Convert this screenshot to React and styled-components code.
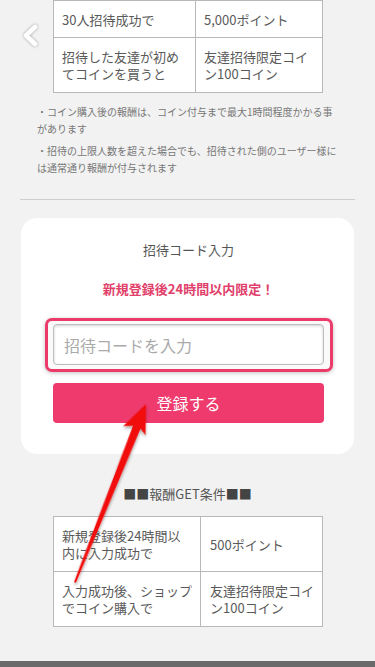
import React from 'react';
import styled, { createGlobalStyle } from 'styled-components';

const GlobalStyle = createGlobalStyle`
  html, body {
    margin: 0;
    padding: 0;
    background: #f2f2f2;
  }
  body {
    font-family: "Noto Sans CJK JP", "Noto Sans", sans-serif;
    color: #555;
  }
`;

const Page = styled.div`
  position: relative;
  width: 375px;
  min-height: 667px;
  display: flex;
  flex-direction: column;
  background: #f2f2f2;
  overflow: hidden;
`;

const Table = styled.table`
  border-collapse: collapse;
  margin: ${props => props.top || 0}px 0 0 53px;
  width: 269px;
  table-layout: fixed;
  background: #fff;
`;

const Cell = styled.td`
  width: ${props => props.width}px;
  height: ${props => props.height}px;
  border: 1px solid #b8b8b8;
  padding: 0 ${props => props.padRight || 8}px 0 ${props => props.padLeft || 8}px;
  box-sizing: border-box;
  font-size: 13px;
  line-height: 17px;
  color: #5a5a5a;
  vertical-align: middle;
`;

const Notes = styled.div`
  width: 301px;
  margin: 11px 0 0 37px;
  display: flex;
  flex-direction: column;
  gap: 6px;
`;

const Note = styled.p`
  margin: 0;
  font-size: 10px;
  line-height: 16.5px;
  color: #777;
`;

const Divider = styled.hr`
  margin: 23px 20px 0;
  border: none;
  border-top: 1px solid #cfcfcf;
`;

const Card = styled.section`
  margin: 18px 21px 0;
  padding: 23px 30px 31px 32px;
  background: #fff;
  border-radius: 16px;
  display: flex;
  flex-direction: column;
  align-items: stretch;
`;

const CardTitle = styled.h2`
  margin: 0;
  font-size: 13px;
  line-height: 18px;
  font-weight: 400;
  color: #555;
  text-align: center;
`;

const Limited = styled.p`
  margin: 21px 0 0;
  font-size: 13px;
  line-height: 18px;
  font-weight: 700;
  color: #e0406a;
  text-align: center;
`;

const InputRing = styled.div`
  margin: 20px -9px 0 -8px;
  padding: 3px 6px 4px 5px;
  border: 3px solid #ec3a6a;
  border-radius: 7px;
  background: #fafafa;
  box-shadow: 0 1px 4px rgba(0, 0, 0, 0.25);
`;

const CodeInput = styled.input`
  display: block;
  width: 100%;
  height: 41px;
  box-sizing: border-box;
  padding: 0 10px;
  border: 1px solid #bdbdbd;
  border-radius: 4px;
  background: #fff;
  box-shadow: inset 0 1px 3px rgba(0, 0, 0, 0.18);
  font-family: "Noto Sans CJK JP", sans-serif;
  font-size: 16px;
  color: #333;
  outline: none;

  &::placeholder {
    color: #aaa;
  }
`;

const SubmitButton = styled.button`
  margin-top: 11px;
  height: 40px;
  border: none;
  border-radius: 4px;
  background: #ee3a6c;
  color: #fff;
  font-family: "Noto Sans CJK JP", sans-serif;
  font-size: 16px;
  cursor: pointer;
`;

const SectionTitle = styled.h3`
  margin: 31px 0 0;
  font-size: 13px;
  line-height: 18px;
  font-weight: 400;
  color: #555;
  text-align: center;

  span {
    color: #444;
  }
`;

const FooterBar = styled.div`
  margin-top: 34px;
  height: 8px;
  background: #6a6a6a;
`;

const BackButton = styled.div`
  position: absolute;
  left: 18px;
  top: 20px;
  width: 24px;
  height: 30px;
  filter: drop-shadow(0 0 1.5px rgba(0, 0, 0, 0.35));
`;

const ArrowLayer = styled.svg`
  position: absolute;
  left: 0;
  top: 0;
  pointer-events: none;
`;

const BackChevron = () => (
  <BackButton>
    <svg width="24" height="30" viewBox="0 0 24 30">
      <polyline points="17,7 8,15.5 17,24" fill="none" stroke="#ffffff" strokeWidth="4.5" strokeLinecap="round" strokeLinejoin="round" />
    </svg>
  </BackButton>
);

const RedArrow = () => (
  <ArrowLayer width="375" height="667" viewBox="0 0 375 667">
    <defs>
      <filter id="arrowShadow" x="-50%" y="-20%" width="200%" height="140%">
        <feDropShadow dx="1" dy="2" stdDeviation="1.5" floodColor="#000" floodOpacity="0.35" />
      </filter>
    </defs>
    <g transform="translate(146 404) rotate(21.7)" filter="url(#arrowShadow)">
      <polygon points="0,0 11,29 4,25 1,192 -1,192 -4,25 -13,29" fill="#f20d0d" />
    </g>
  </ArrowLayer>
);

const topRows = [
  { label: '30人招待成功で', reward: '5,000ポイント', height: 37 },
  { label: '招待した友達が初めてコインを買うと', reward: '友達招待限定コイン100コイン', height: 55 },
];

const getRows = [
  { label: '新規登録後24時間以内に入力成功で', reward: '500ポイント' },
  { label: '入力成功後、ショップでコイン購入で', reward: '友達招待限定コイン100コイン' },
];

export default function App() {
  return (
    <>
      <GlobalStyle />
      <Page>
        <Table>
          <tbody>
            {topRows.map(row => (
              <tr key={row.label}>
                <Cell width={142} height={row.height}>{row.label}</Cell>
                <Cell width={127} height={row.height}>{row.reward}</Cell>
              </tr>
            ))}
          </tbody>
        </Table>

        <Notes>
          <Note>・コイン購入後の報酬は、コイン付与まで最大1時間程度かかる事があります</Note>
          <Note>・招待の上限人数を超えた場合でも、招待された側のユーザー様には通常通り報酬が付与されます</Note>
        </Notes>

        <Divider />

        <Card>
          <CardTitle>招待コード入力</CardTitle>
          <Limited>新規登録後24時間以内限定！</Limited>
          <InputRing>
            <CodeInput placeholder="招待コードを入力" />
          </InputRing>
          <SubmitButton>登録する</SubmitButton>
        </Card>

        <SectionTitle><span>■■</span>報酬GET条件<span>■■</span></SectionTitle>

        <Table top={13}>
          <tbody>
            {getRows.map(row => (
              <tr key={row.label}>
                <Cell width={147} height={55}>{row.label}</Cell>
                <Cell width={122} height={55} padLeft={9}>{row.reward}</Cell>
              </tr>
            ))}
          </tbody>
        </Table>

        <FooterBar />

        <BackChevron />
        <RedArrow />
      </Page>
    </>
  );
}
